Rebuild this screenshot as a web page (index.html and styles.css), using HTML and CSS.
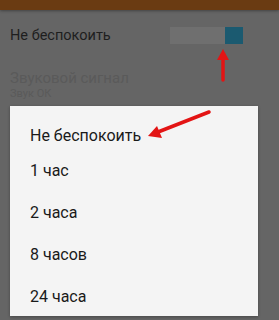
FILE: index.html
```html
<!DOCTYPE html>
<html lang="ru">
<head>
  <meta charset="UTF-8" />
  <meta name="viewport" content="width=device-width, initial-scale=1.0"/>
  <title>Не беспокоить</title>
  <link rel="stylesheet" href="styles.css">
</head>
<body>

<div class="appbar"></div>

<div class="setting-row">
  <span class="setting-title">Не беспокоить</span>
  <div class="switch">
    <span class="switch-track"></span>
    <span class="switch-thumb"></span>
  </div>
</div>

<div class="setting-sound">
  <div class="sound-title">Звуковой сигнал</div>
  <div class="sound-sub">Звук ОК</div>
</div>

<div class="dialog">
  <div class="dialog-item first">Не беспокоить</div>
  <div class="dialog-item">1 час</div>
  <div class="dialog-item">2 часа</div>
  <div class="dialog-item">8 часов</div>
  <div class="dialog-item last">24 часа</div>
</div>

<!-- red annotation arrows drawn over the screenshot -->
<svg class="arrows" viewBox="0 0 279 320" width="279" height="320">
  <line x1="223" y1="80" x2="223" y2="58" stroke="#e31414" stroke-width="3.5" stroke-linecap="round"/>
  <polygon points="223,49 217,60 229,60" fill="#e31414"/>
  <line x1="209" y1="112" x2="158" y2="132" stroke="#e31414" stroke-width="3.5" stroke-linecap="round"/>
  <polygon points="148,136 157,126 162,138" fill="#e31414"/>
</svg>

</body>
</html>
```

FILE: styles.css
```css
* {
  box-sizing: border-box;
}

body {
  margin: 0;
  width: 279px;
  height: 320px;
  overflow: hidden;
  position: relative;
  background-color: #656565;
  font-family: Roboto, 'Noto Sans', sans-serif;
}

.appbar {
  height: 10px;
  background-color: #6a3b12;
  box-shadow: 0 1px 3px rgba(0, 0, 0, 0.35);
}

.setting-row {
  display: flex;
  align-items: center;
  justify-content: space-between;
  height: 34px;
  margin-top: 8px;
  padding: 0 36px 0 10px;
}

.setting-title {
  font-size: 14.5px;
  color: #1e1e1e;
}

.switch {
  display: flex;
  height: 17px;
}

.switch-track {
  width: 55px;
  background-color: #6f6f6f;
}

.switch-thumb {
  width: 18px;
  background-color: #1b5a70;
}

.setting-sound {
  padding: 0 10px;
  margin-top: 17px;
  color: #5a5a5a;
}

.sound-title {
  font-size: 15px;
  line-height: 18px;
}

.sound-sub {
  font-size: 11px;
  line-height: 13px;
}

.dialog {
  position: absolute;
  top: 106px;
  left: 10px;
  width: 248px;
  padding-top: 16px;
  background-color: #f4f4f4;
  box-shadow: 0 1px 3px rgba(0, 0, 0, 0.3);
}

.dialog-item {
  height: 42px;
  line-height: 42px;
  padding-left: 20px;
  font-size: 16px;
  color: #1a1a1a;
}

.dialog-item.first {
  height: 28px;
  line-height: 28px;
}

.dialog-item.last {
  height: 40px;
}

.arrows {
  position: absolute;
  top: 0;
  left: 0;
  pointer-events: none;
}
```
